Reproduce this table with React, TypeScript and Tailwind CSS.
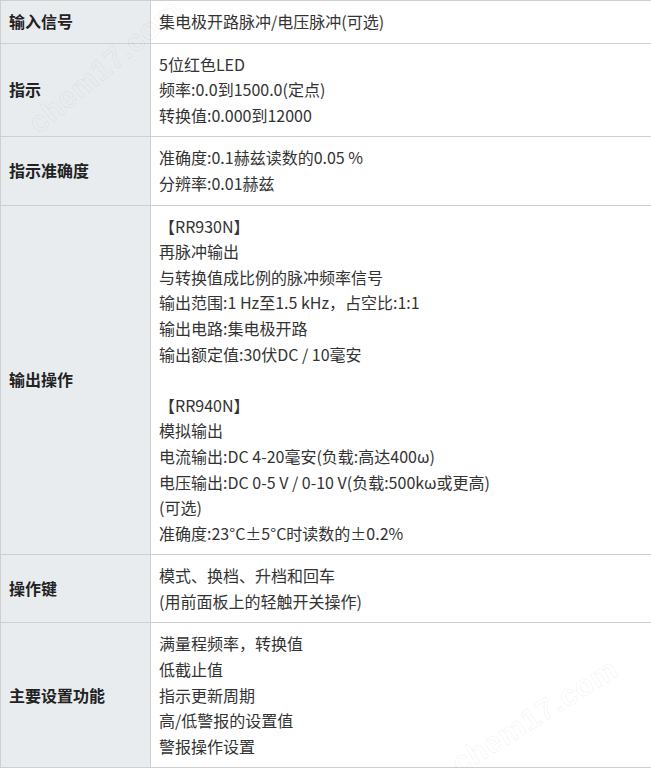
const rows: { label: string; lines: string[] }[] = [
  { label: "输入信号", lines: ["集电极开路脉冲/电压脉冲(可选)"] },
  { label: "指示", lines: ["5位红色LED", "频率:0.0到1500.0(定点)", "转换值:0.000到12000"] },
  { label: "指示准确度", lines: ["准确度:0.1赫兹读数的0.05 %", "分辨率:0.01赫兹"] },
  {
    label: "输出操作",
    lines: [
      "【RR930N】",
      "再脉冲输出",
      "与转换值成比例的脉冲频率信号",
      "输出范围:1 Hz至1.5 kHz，占空比:1:1",
      "输出电路:集电极开路",
      "输出额定值:30伏DC / 10毫安",
      "",
      "【RR940N】",
      "模拟输出",
      "电流输出:DC 4-20毫安(负载:高达400ω)",
      "电压输出:DC 0-5 V / 0-10 V(负载:500kω或更高)",
      "(可选)",
      "准确度:23°C±5°C时读数的±0.2%",
    ],
  },
  { label: "操作键", lines: ["模式、换档、升档和回车", "(用前面板上的轻触开关操作)"] },
  {
    label: "主要设置功能",
    lines: ["满量程频率，转换值", "低截止值", "指示更新周期", "高/低警报的设置值", "警报操作设置"],
  },
];

// faint site watermark laid over the table
function Watermark({ className }: { className: string }) {
  return (
    <div
      className={
        "pointer-events-none absolute w-[190px] select-none whitespace-nowrap text-[30px] font-bold tracking-wide text-transparent [-webkit-text-stroke:1px_rgba(0,0,0,0.06)] " +
        className
      }
      style={{ fontFamily: "'Liberation Sans', sans-serif" }}
    >
      chem17.com
    </div>
  );
}

export default function App() {
  return (
    <div
      className="relative w-[651px] overflow-hidden bg-white text-[16px] leading-[1.6] text-[#333]"
      style={{ fontFamily: "'Noto Sans CJK SC', 'Noto Sans', sans-serif" }}
    >
      <div className="grid grid-cols-[150px_1fr] border-l border-t border-[#cfcfcf]">
        {rows.map((r) => (
          <div key={r.label} className="contents">
            <div className="flex w-[150px] items-center border-b border-r border-[#cfcfcf] bg-[#e9ecef] px-2 font-bold text-[#222]">
              {r.label}
            </div>
            <div className="border-b border-[#cfcfcf] px-2 py-2">
              {r.lines.map((l, i) => (
                <div key={i} className="h-[25.6px] whitespace-nowrap">
                  {l}
                </div>
              ))}
            </div>
          </div>
        ))}
      </div>
      <Watermark className="left-[10px] top-[42px] -rotate-[40deg]" />
      <Watermark className="left-[440px] top-[692px] -rotate-[32deg]" />
    </div>
  );
}
